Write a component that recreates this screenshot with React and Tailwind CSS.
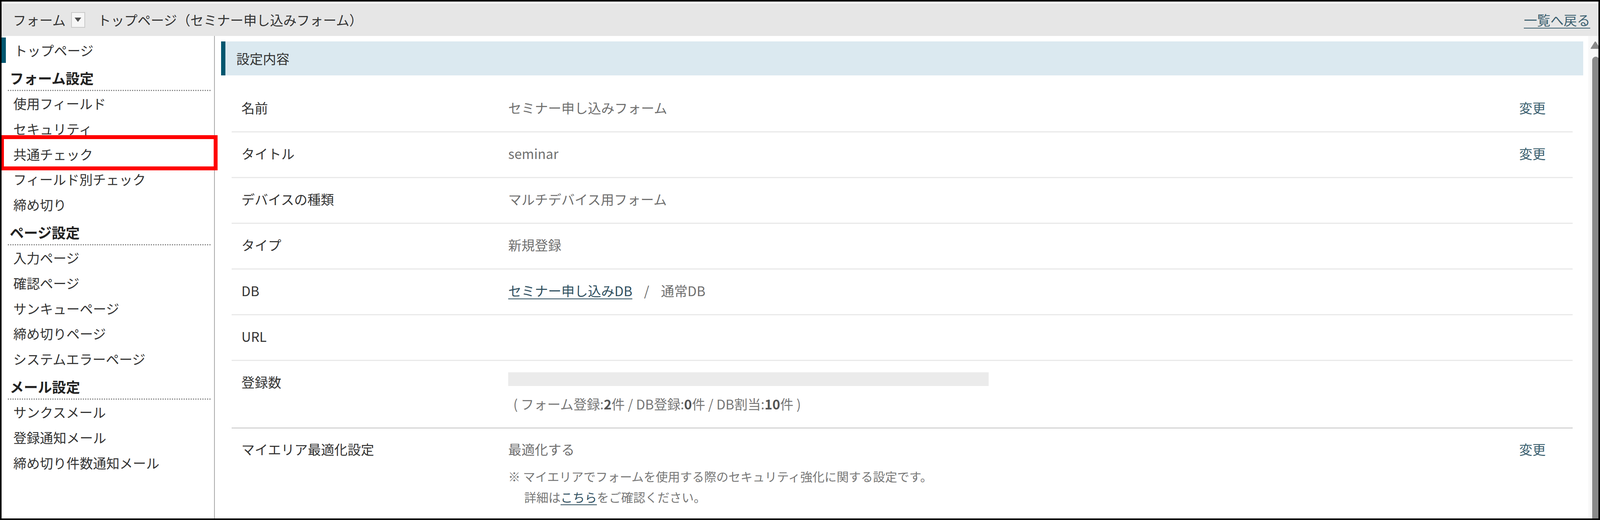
import React from "react";

const sections = [
  {
    title: "フォーム設定",
    items: ["使用フィールド", "セキュリティ", "共通チェック", "フィールド別チェック", "締め切り"],
  },
  {
    title: "ページ設定",
    items: ["入力ページ", "確認ページ", "サンキューページ", "締め切りページ", "システムエラーページ"],
  },
  {
    title: "メール設定",
    items: ["サンクスメール", "登録通知メール", "締め切り件数通知メール"],
  },
];

function Row({ label, children, action }) {
  return (
    <div className="flex pt-[29px] pb-[35px] border-b-[3px] border-[#e9e9e9] leading-[50px]">
      <div className="w-[708px] shrink-0 pl-[25px] text-[#333]">{label}</div>
      <div className="flex-1 min-w-0 text-[#6f6f6f]">{children}</div>
      <div className="w-[137px] shrink-0 text-[#3b5f6f]">{action}</div>
    </div>
  );
}

export default function App() {
  return (
    <div className="relative w-full h-[1331px] border-4 border-black bg-white flex flex-col overflow-hidden font-['Noto_Sans_CJK_JP','Noto_Sans',sans-serif]">
      {/* header */}
      <div className="pt-[5px]">
        <div className="h-[83px] bg-[#e6e6e6] flex items-center pl-[29px] pr-[21px] text-[34px] text-[#333]">
          <span>フォーム</span>
          <span className="ml-[14px] w-[36px] h-[40px] border-2 border-[#c9c9c9] bg-[#f6f6f6] flex items-center justify-center">
            <svg width="17" height="11" viewBox="0 0 17 11">
              <polygon points="0,0 17,0 8.5,11" fill="#4d4d4d" />
            </svg>
          </span>
          <span className="ml-[32px]">トップページ（セミナー申し込みフォーム）</span>
          <a className="ml-auto text-[34px] text-[#3b5f6f] underline underline-offset-[6px] decoration-2">一覧へ戻る</a>
        </div>
      </div>

      <div className="flex flex-1 min-h-0">
        {/* sidebar */}
        <aside className="w-[546px] shrink-0 border-r-2 border-[#a9a9a9] pt-[4px] text-[34px] text-[#333]">
          <div className="h-[64.6px] border-l-[11px] border-[#00566f] pl-[21px] flex items-center">トップページ</div>
          {sections.map((s) => (
            <div key={s.title}>
              <div className="ml-[16px] mr-[9px] h-[72px] pt-[19px] pl-[5px] text-[36px] font-bold leading-[38px] text-[#222] border-b-[3px] border-dotted border-[#8a8a8a]">
                {s.title}
              </div>
              {s.items.map((item) => (
                <div key={item} className="h-[64.6px] pl-[30px] flex items-center">
                  {item}
                </div>
              ))}
            </div>
          ))}
        </aside>

        {/* main */}
        <main className="flex-1 min-w-0 pl-[16px] pr-[13px] pt-[14px] text-[34px]">
          <div className="h-[87px] border-l-[11px] border-[#00566f] bg-[#dbe9f0] pl-[28px] flex items-center text-[#333]">
            設定内容
          </div>

          <div className="mx-[27px] mt-[29px]">
            <Row label="名前" action="変更">セミナー申し込みフォーム</Row>
            <Row label="タイトル" action="変更">seminar</Row>
            <Row label="デバイスの種類">マルチデバイス用フォーム</Row>
            <Row label="タイプ">新規登録</Row>
            <Row label="DB">
              <a className="text-[#2f4f5f] underline underline-offset-[6px] decoration-2">セミナー申し込みDB</a>
              <span className="mx-[30px]">/</span>
              <span>通常DB</span>
            </Row>
            <Row label="URL"></Row>

            <div className="flex pt-[29px] pb-[35px] border-b-[3px] border-[#d5d5d5] leading-[50px]">
              <div className="w-[708px] shrink-0 pl-[25px] text-[#333]">登録数</div>
              <div className="flex-1 min-w-0 text-[#777]">
                <div className="w-[1230px] h-[35px] bg-[#ebebeb]"></div>
                <div className="mt-[21px] pl-[13px]">
                  ( フォーム登録:<b className="text-[#555]">2</b>件 / DB登録:<b className="text-[#555]">0</b>件 / DB割当:<b className="text-[#555]">10</b>件 )
                </div>
              </div>
              <div className="w-[137px] shrink-0"></div>
            </div>

            <div className="flex pt-[28px] leading-[50px]">
              <div className="w-[708px] shrink-0 pl-[25px] text-[#333]">マイエリア最適化設定</div>
              <div className="flex-1 min-w-0 text-[#6f6f6f]">
                <div>最適化する</div>
                <div className="mt-[17px] text-[31px] leading-[53px] text-[#777]">
                  <div>※ マイエリアでフォームを使用する際のセキュリティ強化に関する設定です。</div>
                  <div className="pl-[41px]">
                    詳細は<a className="text-[#2f4f5f] underline underline-offset-[6px] decoration-2">こちら</a>をご確認ください。
                  </div>
                </div>
              </div>
              <div className="w-[137px] shrink-0 text-[#3b5f6f]">変更</div>
            </div>
          </div>
        </main>

        {/* scrollbar */}
        <div className="w-[26px] shrink-0 bg-[#f8f8f8] flex flex-col overflow-hidden">
          <svg className="mt-[13px] ml-[5px] shrink-0" width="26" height="20" viewBox="0 0 26 20">
            <path d="M2 19 L12 3 Q13 1.5 14 3 L24 19 Z" fill="#8a8a8a" stroke="#8a8a8a" strokeWidth="2" strokeLinejoin="round" />
          </svg>
          <div className="mt-[20px] ml-[10px] flex-1 w-[18px] bg-[#8a8a8a] rounded-t-[9px]"></div>
        </div>
      </div>

      {/* highlight annotation */}
      <div className="absolute left-[-4px] top-[342px] w-[557px] h-[90px] border-[10px] border-[#ff0000]"></div>
    </div>
  );
}
